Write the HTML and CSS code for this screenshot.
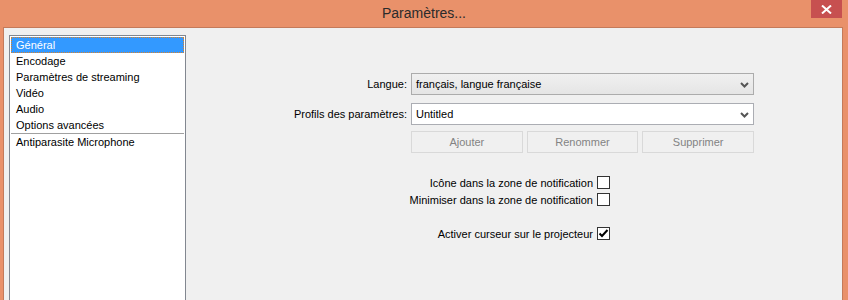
FILE: index.html
```html
<!DOCTYPE html>
<html lang="fr">
  <head>
    <meta charset="UTF-8" />
    <title>Paramètres...</title>
    <link rel="stylesheet" href="styles.css">
  </head>
  <body>
    <div class="window">
      <div class="titlebar">
        <span class="title">Paramètres...</span>
        <div class="close">
          <svg width="11" height="9" viewBox="0 0 11 9">
            <path d="M1 0.5 L10 8.5 M10 0.5 L1 8.5" stroke="#fff" stroke-width="2" />
          </svg>
        </div>
      </div>

      <div class="client">
        <ul class="list">
          <li class="selected">Général</li>
          <li>Encodage</li>
          <li>Paramètres de streaming</li>
          <li>Vidéo</li>
          <li>Audio</li>
          <li>Options avancées</li>
          <li class="sep"></li>
          <li>Antiparasite Microphone</li>
        </ul>

        <div class="panel">
          <div class="form">
            <label>Langue:</label>
            <div class="combo gray">
              <span>français, langue française</span>
              <svg class="arrow" width="9" height="6" viewBox="0 0 9 6">
                <path d="M1 1 L4.5 4.5 L8 1" fill="none" stroke="#555" stroke-width="2" />
              </svg>
            </div>

            <label class="second">Profils des paramètres:</label>
            <div class="combo white second">
              <span>Untitled</span>
              <svg class="arrow" width="9" height="6" viewBox="0 0 9 6">
                <path d="M1 1 L4.5 4.5 L8 1" fill="none" stroke="#555" stroke-width="2" />
              </svg>
            </div>

            <span></span>
            <div class="buttons">
              <button disabled>Ajouter</button>
              <button disabled>Renommer</button>
              <button disabled>Supprimer</button>
            </div>
          </div>

          <div class="checks">
            <div class="check-row">
              <span>Icône dans la zone de notification</span>
              <span class="box"></span>
            </div>
            <div class="check-row">
              <span>Minimiser dans la zone de notification</span>
              <span class="box"></span>
            </div>
            <div class="check-row gap">
              <span>Activer curseur sur le projecteur</span>
              <span class="box">
                <svg width="11" height="11" viewBox="0 0 11 11">
                  <path d="M1.5 5.5 L4 8 L9.5 2" fill="none" stroke="#000" stroke-width="2" />
                </svg>
              </span>
            </div>
          </div>
        </div>
      </div>
    </div>
  </body>
</html>
```

FILE: styles.css
```css
body {
  margin: 0;
  padding: 0;
  background-color: #e9916a;
  font-family: "Liberation Sans", Arial, sans-serif;
  font-size: 11px;
  color: #000;
}

.window {
  height: 300px;
  display: flex;
  flex-direction: column;
}

.titlebar {
  height: 27px;
  position: relative;
  display: flex;
  justify-content: center;
  align-items: center;
}

.title {
  font-size: 14px;
  color: #2b2b2b;
  margin-top: -1px;
}

.close {
  position: absolute;
  top: 0;
  right: 6px;
  width: 31px;
  height: 18px;
  background-color: #c75050;
  display: flex;
  justify-content: center;
  align-items: center;
}

.client {
  flex: 1;
  margin: 0 5px 0 3px;
  border: 1px solid #c47a5a;
  border-bottom: none;
  background-color: #f0f0f0;
  display: flex;
  padding: 7px 0 0 5px;
}

.list {
  list-style: none;
  margin: 0;
  padding: 1px;
  width: 173px;
  border: 1px solid #828790;
  border-bottom: none;
  background-color: #fff;
}

.list li {
  height: 16px;
  line-height: 16px;
  padding-left: 5px;
  white-space: nowrap;
}

.list li.selected {
  background-color: #3399ff;
  color: #fff;
  outline: 1px dotted #d9822b;
  outline-offset: -1px;
}

.list li.sep {
  height: 1px;
  padding: 0;
  background-color: #a0a0a0;
}

.panel {
  flex: 1;
  padding-top: 38px;
}

.form {
  display: grid;
  grid-template-columns: 221px 343px;
  column-gap: 4px;
  align-items: center;
}

.form label {
  text-align: right;
}

.second {
  margin-top: 8px;
}

.combo {
  height: 22px;
  box-sizing: border-box;
  border: 1px solid #acacac;
  display: flex;
  align-items: center;
  justify-content: space-between;
  padding: 0 4px 0 4px;
}

.combo.gray {
  background: linear-gradient(#f0f0f0, #e5e5e5);
}

.combo.white {
  background-color: #fff;
  border-color: #abadb3;
}

.arrow {
  margin-top: 1px;
}

.buttons {
  display: flex;
  gap: 4px;
  margin-top: 6px;
}

.buttons button {
  flex: 1;
  height: 22px;
  font-family: inherit;
  font-size: 11px;
  color: #838383;
  background-color: #f0f0f0;
  border: 1px solid #d9d9d9;
  padding: 0;
}

.checks {
  width: 424px;
  display: flex;
  flex-direction: column;
  align-items: flex-end;
  margin-top: 21px;
}

.check-row {
  display: flex;
  align-items: center;
  gap: 4px;
  height: 17px;
}

.check-row.gap {
  margin-top: 17px;
}

.box {
  width: 11px;
  height: 11px;
  border: 1px solid #333;
  background-color: #fff;
  display: flex;
}
```
